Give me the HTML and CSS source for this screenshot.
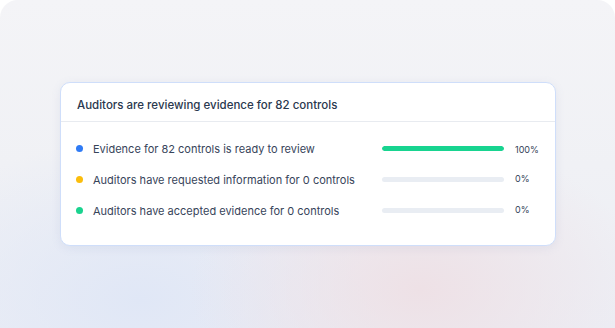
FILE: index.html
```html
<!DOCTYPE html>
<html>
<head>
<meta charset="utf-8">
<link rel="stylesheet" href="styles.css">
</head>
<body>
<div class="canvas">
  <div class="card">
    <div class="card-header">Auditors are reviewing evidence for 82 controls</div>
    <div class="card-body">
      <div class="row">
        <span class="dot dot-blue"></span>
        <span class="label">Evidence for 82 controls is ready to review</span>
        <span class="track"><span class="fill" style="width:100%"></span></span>
        <span class="pct pct-full">100%</span>
      </div>
      <div class="row">
        <span class="dot dot-yellow"></span>
        <span class="label">Auditors have requested information for 0 controls</span>
        <span class="track"><span class="fill" style="width:0%"></span></span>
        <span class="pct">0%</span>
      </div>
      <div class="row">
        <span class="dot dot-green"></span>
        <span class="label">Auditors have accepted evidence for 0 controls</span>
        <span class="track"><span class="fill" style="width:0%"></span></span>
        <span class="pct">0%</span>
      </div>
    </div>
  </div>
</div>
</body>
</html>
```
FILE: styles.css
```css
* { box-sizing: border-box; }
html, body { margin: 0; padding: 0; background: #ffffff; }
body { font-family: Inter, "Noto Sans", sans-serif; }

.canvas {
  width: 615px;
  height: 328px;
  border-radius: 18px 18px 0 0;
  overflow: hidden;
  padding: 82px 0 0 60px;
  background:
    radial-gradient(ellipse 230px 150px at 420px 290px, rgba(238, 224, 229, 0.95), rgba(238, 224, 229, 0) 100%),
    radial-gradient(ellipse 260px 160px at 140px 300px, rgba(224, 231, 246, 1), rgba(224, 231, 246, 0) 100%),
    linear-gradient(180deg, #f4f4f7 0%, #f0f1f5 50%, #eceef5 100%);
}

.card {
  width: 496px;
  height: 164px;
  background: #ffffff;
  border: 1px solid #cfdefa;
  border-radius: 10px;
  box-shadow: 0 2px 10px rgba(120, 140, 190, 0.12);
  display: flex;
  flex-direction: column;
}

.card-header {
  height: 39px;
  padding: 5px 16px 0;
  display: flex;
  align-items: center;
  font-size: 11.5px;
  font-weight: 500;
  color: #2a384e;
  border-bottom: 1px solid #e8ebf0;
}

.card-body {
  padding: 11px 16px 0 15px;
  display: flex;
  flex-direction: column;
}

.row {
  height: 31px;
  display: flex;
  align-items: center;
}

.dot {
  width: 7px;
  height: 7px;
  border-radius: 50%;
  flex: none;
  margin-right: 10px;
}
.dot-blue { background: #2f7bf5; }
.dot-yellow { background: #fbbd0c; }
.dot-green { background: #1ad38f; }

.label {
  flex: 1;
  font-size: 11px;
  color: #37445a;
  white-space: nowrap;
}

.track {
  width: 122px;
  height: 5px;
  border-radius: 3px;
  background: #e9edf3;
  flex: none;
  overflow: hidden;
  display: flex;
}
.fill {
  height: 100%;
  background: #18d490;
  border-radius: 3px;
}

.pct {
  width: 24px;
  margin-left: 11px;
  font-size: 9px;
  color: #354258;
  position: relative;
  top: -1px;
  white-space: nowrap;
}
.pct-full { top: 1px; }
```
